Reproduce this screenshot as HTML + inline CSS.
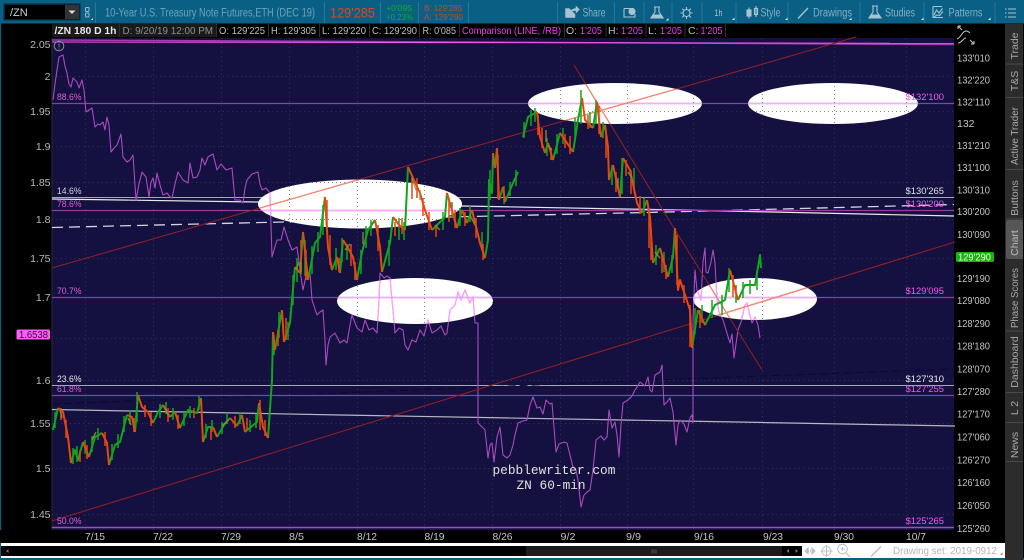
<!DOCTYPE html>
<html><head><meta charset="utf-8"><style>
html,body{margin:0;padding:0;background:#000;width:1024px;height:560px;overflow:hidden}
svg{display:block;font-family:"Liberation Sans",sans-serif;filter:blur(.35px)}
</style></head><body>
<svg width="1024" height="560" viewBox="0 0 1024 560" xmlns="http://www.w3.org/2000/svg">
<defs>
<clipPath id="ell"><ellipse cx="360" cy="204" rx="102" ry="24.5"/><ellipse cx="615" cy="103.5" rx="87" ry="20.5"/><ellipse cx="833" cy="103.5" rx="85" ry="20.5"/><ellipse cx="415" cy="301" rx="78" ry="23"/><ellipse cx="755" cy="299" rx="62" ry="21"/></clipPath>
<path id="pur" d="M53 100L55 84 57 70 59 57 63 55 65 66 67 73 69 84 71 87 73 78 77 82 79 88 82 80 84 90 86 112 89 110 92 108 95 127 98 124 100 125 103 122 105 130 107 117 109 125 111 152 114 148 117 145 121 134 123 157 127 162 130 160 133 155 136 200 139 184 142 172 146 177 149 197 151 182 153 178 155 188 157 173 160 185 163 195 167 193 170 197 172 198 175 184 178 172 183 180 188 183 190 163 193 178 197 177 200 170 202 158 205 165 208 157 213 154 217 170 221 164 226 170 232 168 235 200 240 200 243 203 245 188 247 180 252 174 258 172 260 184 262 190 266 188 270 193 272 257 274 250 277 240 281 240 284 227 288 240 292 250 297 247 300 270 303 290 306 276 310 273 312 300 317 315 320 312 323 310 325 340 326 365 328 345 330 337 335 333 340 343 344 340 347 343 350 325 352 315 357 328 362 332 365 320 369 330 373 328 377 333 379 300 380 273 384 278 387 276 390 278 392 300 393 310 395 333 399 328 403 330 405 345 408 350 412 340 416 342 420 330 424 336 428 320 432 333 437 330 441 326 445 335 447 333 450 310 455 305 458 292 461 300 465 290 470 303 473 297 475 323 478 323 478 423 485 430 488 458 490 445 492 443 494 462 497 437 500 427 503 455 507 458 510 455 513 445 515 435 518 423 523 421 527 420 530 405 533 397 537 408 540 407 543 414 546 400 550 404 552 403 556 452 559 444 564 442 567 443 570 455 573 467 576 470 578 480 581 507 584 495 587 492 590 490 593 470 596 440 601 436 604 440 607 437 609 410 612 428 615 422 617 435 619 457 621 425 623 403 628 400 632 396 635 390 640 382 645 386 648 377 650 390 652 392 655 375 660 372 662 365 664 405 667 402 670 398 673 412 676 445 678 425 680 420 684 424 687 432 690 418 692 415 693 423 693 320 695 270 697 290 701 300 703 262 705 248 706 272 708 273 711 262 713 250 715 263 717 300 719 312 723 320 726 330 730 343 732 334 734 358 738 330 741 322 745 305 747 303 750 316 752 323 755 317 758 325 760 338"/>
</defs>
<!-- page -->
<rect width="1024" height="560" fill="#000"/>
<rect x="0" y="0" width="1024" height="23.5" fill="#0a5f85"/>
<rect x="0" y="0" width="1.2" height="560" fill="#0a5f85"/>
<rect x="0" y="558" width="1024" height="2" fill="#0a5f85"/>
<!-- top bar -->
<rect x="3.5" y="3.5" width="77" height="17" fill="#06283a"/>
<rect x="5" y="5" width="60" height="14" fill="#000"/>
<rect x="65" y="5" width="14" height="14" fill="#333"/>
<path d="M68.5 10.5h7l-3.500 3.500z" fill="#ddd"/>
<text x="10" y="16" font-size="11" fill="#c8d2d8">/ZN</text>
<rect x="85.5" y="7.5" width="3.5" height="4" rx="1" fill="none" stroke="#9fb8c4"/><rect x="85.5" y="13" width="3.5" height="4" rx="1" fill="none" stroke="#9fb8c4"/>
<path d="M91 20h2v-2z" fill="#cfe"/>
<g stroke="#2a7699" stroke-width="1"><path d="M95.5 2v21M324.5 2v21M380.5 2v21M418.5 2v21M468.5 2v21M557.500 2v21M614.5 2v21M644 2v21M672 2v21M702 2v21M736 2v21M788 2v21M860 2v21M924 2v21M995 2v21"/></g>
<text x="105" y="16.500" font-size="11.500" fill="#6ea3b9" textLength="210" lengthAdjust="spacingAndGlyphs">10-Year U.S. Treasury Note Futures,ETH (DEC 19)</text>
<text x="330" y="17.500" font-size="13.500" fill="#e8431c" textLength="45" lengthAdjust="spacingAndGlyphs">129'285</text>
<text x="386" y="11" font-size="8.500" fill="#11a83a" textLength="26" lengthAdjust="spacingAndGlyphs">+0'095</text>
<text x="386" y="20" font-size="8.500" fill="#11a83a" textLength="27" lengthAdjust="spacingAndGlyphs">+0.23%</text>
<text x="424" y="11" font-size="8.500" fill="#c9482c" textLength="38" lengthAdjust="spacingAndGlyphs">B: 129'285</text>
<text x="424" y="20" font-size="8.500" fill="#c9482c" textLength="39" lengthAdjust="spacingAndGlyphs">A: 129'290</text>
<!-- toolbar right -->
<g fill="none" stroke="#a9c4d0" stroke-width="1.1">
<path d="M575 14v3.500h-9.500v-9h4M570 13c.5-3 3-4.500 6-4.500V6l3.500 3.500-3.500 3.500v-2.500c-2.500 0-4.500.5-6 2.500z" fill="#a9c4d0" stroke-width=".5"/>
<path d="M624 8.500h9v2M624 8.500v8.500h11v-3"/><circle cx="632" cy="11.500" r="3" fill="#a9c4d0"/>
<path d="M655 7v5l-4 6h12l-4-6V7M654 7h6"/><path d="M653 15h8l2 3h-12z" fill="#a9c4d0"/>
<circle cx="686.500" cy="13" r="3.500"/><path d="M686.500 7v2.500M686.500 16.500V19M680.500 13H683M690 13h2.500M682.300 8.800l1.800 1.800M689 15.500l1.800 1.800M682.300 17.200l1.800-1.800M689 10.500l1.800-1.800"/>
<path d="M749 7.500v11M756 6v11"/><rect x="747" y="10" width="4" height="6" fill="#a9c4d0"/><rect x="754.500" y="8.500" width="3" height="6"/>
<path d="M798 18.500 808 8" stroke-width="1.400"/>
<path d="M873 6v6l-4 6h12l-4-6V6M872 6h6"/><path d="M871 15h8l2 3h-12z" fill="#a9c4d0"/>
<path d="M933 6.500h9M933 6.500v11h10M934 15l2.500-5 2.500 3 3.500-4.500M934 17l3-2 2.500.5 3.500-4"/>
<path d="M1008 9h8M1008 13h8M1008 17h8"/><path d="M1005 9h1.500M1005 13h1.500M1005 17h1.500"/>
</g>
<g font-size="11.500" fill="#84b0c3">
<text x="582.500" y="16.500" textLength="23" lengthAdjust="spacingAndGlyphs">Share</text>
<text x="714.500" y="16" font-size="9" fill="#a9c4d0" textLength="8" lengthAdjust="spacingAndGlyphs">1h</text>
<text x="760.500" y="16.500" textLength="20" lengthAdjust="spacingAndGlyphs">Style</text>
<text x="813" y="16.500" textLength="39" lengthAdjust="spacingAndGlyphs">Drawings</text>
<text x="885" y="16.500" textLength="30" lengthAdjust="spacingAndGlyphs">Studies</text>
<text x="948.500" y="16.500" textLength="34" lengthAdjust="spacingAndGlyphs">Patterns</text>
</g>
<path d="M732 20h2.500v-2.500zM785 20h2.500v-2.500zM849 20h2.500v-2.500zM921 20h2.500v-2.500zM988 20h2.500v-2.500zM666 20.500h2.500v-2.500z" fill="#cfe"/>
<!-- header row -->
<g fill="#1a1a1a"><rect x="52" y="24" width="67" height="13"/><rect x="119" y="24" width="97" height="13"/></g>
<g stroke="#303030" stroke-width="1"><path d="M119.500 24v13M216.500 24v13M268.500 24v13M319.500 24v13M369.500 24v13M419.500 24v13M459.500 24v13M564.500 24v13M606 24v13M646 24v13M685 24v13M725.500 24v13"/></g>
<text x="54.500" y="34" font-size="10.500" font-weight="bold" fill="#e8e8e8" textLength="62" lengthAdjust="spacingAndGlyphs">/ZN 180 D 1h</text>
<g font-size="10.500" fill="#bdbdbd">
<text x="122.500" y="34" fill="#8f8f8f" textLength="90.500" lengthAdjust="spacingAndGlyphs">D: 9/20/19 12:00 PM</text>
<text x="219" y="34" textLength="46" lengthAdjust="spacingAndGlyphs">O: 129'225</text>
<text x="271" y="34" textLength="45" lengthAdjust="spacingAndGlyphs">H: 129'305</text>
<text x="322" y="34" textLength="44" lengthAdjust="spacingAndGlyphs">L: 129'220</text>
<text x="372" y="34" textLength="45" lengthAdjust="spacingAndGlyphs">C: 129'290</text>
<text x="422.500" y="34" textLength="33.500" lengthAdjust="spacingAndGlyphs">R: 0'085</text>
<text x="462" y="34" fill="#e83fe8" textLength="99" lengthAdjust="spacingAndGlyphs">Comparison (LINE, /RB)</text>
<text x="566" y="34">O:</text><text x="580" y="34" fill="#e83fe8" textLength="22" lengthAdjust="spacingAndGlyphs">1'205</text>
<text x="608" y="34">H:</text><text x="621" y="34" fill="#e83fe8" textLength="22" lengthAdjust="spacingAndGlyphs">1'205</text>
<text x="648" y="34">L:</text><text x="660" y="34" fill="#e83fe8" textLength="22" lengthAdjust="spacingAndGlyphs">1'205</text>
<text x="688" y="34">C:</text><text x="700.500" y="34" fill="#e83fe8" textLength="22" lengthAdjust="spacingAndGlyphs">1'205</text>
</g>
<g fill="none" stroke="#c8c8c8" stroke-width="1"><path d="M958 26l4 4M958 26h3M958 26v3M974 44l-4-4M974 44h-3M974 44v-3M957 39c4-1 5-8 9-8 2 0 3 1 4 2M958 43c4 0 5-5 8-5"/></g>
<!-- chart -->
<rect x="52" y="38" width="902" height="492" fill="#14103f"/>
<rect x="51.500" y="38" width="1" height="492" fill="#2a2a3a"/>
<g fill="none" stroke="#34325f" stroke-width="1" stroke-dasharray="1 3.500">
<path d="M85.500 38v492M153.500 38v492M221.500 38v492M289.500 38v492M357.500 38v492M424.500 38v492M492.500 38v492M560.500 38v492M627.500 38v492M693.500 38v492M762.500 38v492M834.500 38v492M906.500 38v492"/>
<path d="M52 76.500h902M52 111.500h902M52 146.500h902M52 182.500h902M52 219.500h902M52 258.500h902M52 338.500h902M52 380.500h902M52 423.500h902M52 468.500h902M52 514.500h902"/>
</g>
<!-- white / grey lines under ellipses -->
<path d="M52 197.500h902M52 385.500h902" stroke="#a8a6bc" stroke-width="1.100" fill="none"/>
<path d="M52 199 258 202 462 206 680 210 954 216" stroke="#e8e8ee" stroke-width="1.200" fill="none"/>
<path d="M52 227.500 283 222 450 217 667 212 954 204.500" stroke="#d6d4de" stroke-width="1.300" fill="none" stroke-dasharray="11 6"/>
<path d="M52 409.500 340 415 680 421 955 426" stroke="#b8b6c4" stroke-width="1.200" fill="none"/>
<path d="M52 404 340 393 680 379 954 369" stroke="#0b0930" stroke-width="1" fill="none" stroke-dasharray="8 4"/>
<!-- ellipses -->
<g fill="#fff"><ellipse cx="360" cy="204" rx="102" ry="24.500"/><ellipse cx="615" cy="103.500" rx="87" ry="20.500"/><ellipse cx="833" cy="103.500" rx="85" ry="20.500"/><ellipse cx="415" cy="301" rx="78" ry="23"/><ellipse cx="755" cy="299" rx="62" ry="21"/></g>
<g clip-path="url(#ell)" fill="none" stroke="#888" stroke-width="1" stroke-dasharray="1 3">
<path d="M289.500 38v492M357.500 38v492M424.500 38v492M492.500 38v492M560.500 38v492M627.500 38v492M693.500 38v492M762.500 38v492M834.500 38v492M906.500 38v492"/>
<path d="M52 111.500h902M52 182.500h902M52 219.500h902M52 338.500h902"/>
</g>
<!-- horizontals -->
<path d="M52 40 954 44.500" stroke="#a33ab8" stroke-width="1.500" fill="none"/>
<path d="M52 42 954 43.300" stroke="#ee5cee" stroke-width="1" fill="none"/>
<g stroke="#8a3fa3" stroke-width="1.300" fill="none">
<path d="M52 103.500h902M52 210.500h902M52 297.500h902M52 395.500h902"/>
<path d="M52 527.500h902" stroke="#a24cc0" stroke-width="1.500"/>
</g>
<g clip-path="url(#ell)"><path d="M52 103.500h902M52 210.500h902M52 297.500h902" stroke="#ffa6ff" stroke-width="1.300" fill="none"/></g>
<!-- purple -->
<use href="#pur" fill="none" stroke="#a84bc0" stroke-width="1.100" stroke-linejoin="round"/>
<g clip-path="url(#ell)"><use href="#pur" fill="none" stroke="#ffa0ff" stroke-width="1.200"/></g>
<!-- red lines -->
<g fill="none" stroke="#8e1f28" stroke-width="1.100">
<path d="M52 268 340 185 560 122 680 88 856 37"/>
<path d="M52 521 340 432 680 327 955 242"/>
<path d="M574 65 680 238 762 370"/>
</g>
<g clip-path="url(#ell)" fill="none" stroke="#ff8a70" stroke-width="1.100">
<path d="M52 268 340 185 560 122 680 88 856 37"/>
<path d="M52 521 340 432 680 327 955 242"/>
<path d="M574 65 680 238 762 370"/>
</g>
<!-- price candles -->
<g fill="none" stroke-linejoin="round">
<g stroke="#12a51c" stroke-width="2">
<path d="M53 430 58 408M71 463 75 450 78 460 83 442M89 457 95 437 102 433M109 465 115 445 120 442 127 415M135 432 138 395M153 423 158 412 163 405M170 417 175 412M180 428 188 410 197 413 201 398M203 442 208 427 213 427M217 437 224 425 230 418M237 426 242 415M245 432 257 422 259 403M268 438 272 380 273 332M275 350 282 310M284 342 290 323 292 300 295 267M300 273 303 232M308 280 315 243 320 237 325 197M332 270 337 257M340 273 343 240M357 280 362 252 368 230 375 220M382 272 390 243 393 217M405 230 408 167M432 230 440 222 445 217 447 193M457 228 462 210M467 223 472 210M485 258 488 240 489 180 492 193 493 153M495 168 497 148M499 200 503 187M505 202 513 183 518 172M523 137 528 117 537 112M545 153 548 143M553 160 560 133M573 152 578 120 582 98M593 128 597 102M601 137 605 125M609 180 613 165M620 197 623 158M642 213 647 200M653 263 660 248M668 277 673 257 675 228M692 348 698 310M705 325 715 305 725 300 730 270M738 300 745 285 755 285 760 255 761 268"/>
</g>
<g stroke="#12a51c" stroke-width="1.500">
<path d="M55 412v16M73 448v16M77 446v16M85 440v14M92 436v16M98 428v12M112 444v16M118 434v14M124 416v16M130 410v14M137 392v30M160 404v14M166 402v12M173 408v12M184 412v14M190 406v12M199 396v14M206 424v14M212 420v12M222 422v12M227 414v10M240 412v12M250 420v12M256 414v14M274 335v20M279 312v26M288 322v18M293 275v30M297 258v24M305 240v36M312 246v28M318 232v20M323 205v30M336 248v22M342 238v24M347 244v16M361 250v24M366 226v22M371 220v16M389 240v26M399 218v22M404 222v18M443 212v18M452 202v16M460 208v18M470 206v16M482 232v18M490 170v30M504 186v18M510 182v14M516 170v16M524 122v16M531 110v16M535 108v14M547 138v18M557 134v20M563 128v16M575 118v22M581 90v34M590 112v16M596 100v24M603 122v16M612 165v20M622 158v36M634 168v22M644 198v18M656 245v20M664 252v20M672 255v18M695 308v26M702 305v18M712 300v18M722 295v20M729 268v24M736 285v18M743 282v16M750 280v14M757 270v20"/>
</g>
<g stroke="#e8470f" stroke-width="2">
<path d="M58 408 63 412 68 437 71 463M83 442 89 457M102 433 107 443 109 465M127 415 132 417 135 432M138 395 142 407 148 412 153 423M163 405 170 417M175 412 180 428M201 398 203 442M213 427 217 437M230 418 237 426M242 415 245 432M259 403 263 427 268 438M273 332 275 350M282 310 284 342M295 267 300 273M303 232 308 280M325 197 328 247 332 270M337 257 340 273M343 240 348 248 353 257 357 280M375 220 380 247 382 272M393 217 400 226 405 230M408 167 420 193 425 210 432 230M447 193 457 228M462 210 467 223M472 210 480 243 485 258M493 153 495 168M497 148 499 200M503 187 505 202M537 112 540 137 545 153M548 143 553 160M560 133 567 143 573 152M582 98 585 120 593 128M597 102 601 137M605 125 608 147 609 180M613 165 620 197M623 158 630 170 637 203 642 213M647 200 650 217 653 263M660 248 668 277M675 228 678 290 680 280 690 310 692 348M698 310 705 325M730 270 738 300"/>
</g>
<g stroke="#e8470f" stroke-width="1.500">
<path d="M61 408v12M66 420v18M80 450v12M87 445v14M105 432v14M134 418v14M145 405v12M151 412v14M168 408v14M178 415v14M194 408v10M211 428v12M235 416v12M247 418v12M260 400v30M265 420v16M278 330v16M286 318v22M301 240v32M306 250v30M327 200v30M330 235v30M339 258v14M351 244v22M355 262v18M378 225v26M395 222v14M402 218v16M412 175v24M417 178v20M423 198v18M429 212v18M436 225v12M449 198v24M455 210v18M465 212v14M476 218v20M483 244v16M498 155v44M538 115v20M542 128v20M551 148v12M565 134v14M570 136v18M588 115v14M599 106v28M606 130v28M616 172v20M626 160v16M631 170v24M640 196v18M649 208v40M651 230v30M662 255v18M666 265v14M677 235v50M684 285v18M690 305v42M700 310v18M733 275v22"/>
</g>
<g stroke="#8f8f3a" stroke-width="1.500" opacity=".85"><path d="M60 410 62 418M92 440 96 432M128 418 131 425M165 408 168 415M222 426 228 420M296 270 299 262M345 250 350 244M412 178 416 190M435 225 440 230M470 215 475 225M548 145 552 150M628 172 632 178M655 252 660 258M301 262v12M363 232v12M420 190v10M546 130v12M618 178v10"/></g>
</g>
<circle cx="59" cy="46" r="4.800" fill="none" stroke="#8c8ca0" stroke-width="1"/><text x="59" y="49.500" font-size="8" fill="#a0a0b0" text-anchor="middle">!</text>
<!-- fib labels -->
<g font-size="9.500">
<text x="57" y="100" fill="#e05ee0" textLength="24.500" lengthAdjust="spacingAndGlyphs">88.6%</text>
<text x="57" y="194" fill="#d8d8e0" textLength="24.500" lengthAdjust="spacingAndGlyphs">14.6%</text>
<text x="57" y="207" fill="#e05ee0" textLength="24.500" lengthAdjust="spacingAndGlyphs">78.6%</text>
<text x="57" y="294" fill="#e05ee0" textLength="24.500" lengthAdjust="spacingAndGlyphs">70.7%</text>
<text x="57" y="382" fill="#e8e8f0" textLength="24.500" lengthAdjust="spacingAndGlyphs">23.6%</text>
<text x="57" y="392" fill="#e05ee0" textLength="24.500" lengthAdjust="spacingAndGlyphs">61.8%</text>
<text x="57" y="524" fill="#e05ee0" textLength="24.500" lengthAdjust="spacingAndGlyphs">50.0%</text>
<text x="905.500" y="100" fill="#ee5cee" textLength="38.500" lengthAdjust="spacingAndGlyphs">$132'100</text>
<text x="905.500" y="194" fill="#e0e0e8" textLength="38.500" lengthAdjust="spacingAndGlyphs">$130'265</text>
<text x="905.500" y="207" fill="#ee5cee" textLength="38.500" lengthAdjust="spacingAndGlyphs">$130'200</text>
<text x="905.500" y="294" fill="#ee5cee" textLength="38.500" lengthAdjust="spacingAndGlyphs">$129'095</text>
<text x="905.500" y="382" fill="#e8e8f0" textLength="38.500" lengthAdjust="spacingAndGlyphs">$127'310</text>
<text x="905.500" y="392" fill="#ee5cee" textLength="38.500" lengthAdjust="spacingAndGlyphs">$127'255</text>
<text x="905.500" y="524" fill="#ee5cee" textLength="38.500" lengthAdjust="spacingAndGlyphs">$125'265</text>
</g>
<text x="492.500" y="474" font-family="Liberation Mono,monospace" font-size="12.800" fill="#e0e0e0">pebblewriter.com</text>
<text x="516.500" y="489" font-family="Liberation Mono,monospace" font-size="12.800" fill="#e0e0e0">ZN 60-min</text>
<!-- left axis -->
<g font-size="10.500" fill="#b8b8b8" text-anchor="end">
<text x="50.500" y="48">2.05</text><text x="50.500" y="80">2</text><text x="50.500" y="115">1.95</text><text x="50.500" y="150">1.9</text><text x="50.500" y="186">1.85</text><text x="50.500" y="223">1.8</text><text x="50.500" y="262">1.75</text><text x="50.500" y="301">1.7</text><text x="50.500" y="384">1.6</text><text x="50.500" y="427">1.55</text><text x="50.500" y="472">1.5</text><text x="50.500" y="518">1.45</text>
</g>
<rect x="16.500" y="329.500" width="33.500" height="10" rx="1.500" fill="#ff5cf5"/>
<text x="19" y="338" font-size="10" fill="#2a1038" textLength="29" lengthAdjust="spacingAndGlyphs">1.6538</text>
<!-- right axis -->
<g font-size="10.500" fill="#c4c4c4">
<text x="957" y="61.500" textLength="33" lengthAdjust="spacingAndGlyphs">133'010</text>
<text x="957" y="83.500" textLength="33" lengthAdjust="spacingAndGlyphs">132'220</text>
<text x="957" y="105.500" textLength="33" lengthAdjust="spacingAndGlyphs">132'110</text>
<text x="957" y="127">132</text>
<text x="957" y="149" textLength="33" lengthAdjust="spacingAndGlyphs">131'210</text>
<text x="957" y="171" textLength="33" lengthAdjust="spacingAndGlyphs">131'100</text>
<text x="957" y="193.500" textLength="33" lengthAdjust="spacingAndGlyphs">130'310</text>
<text x="957" y="215" textLength="33" lengthAdjust="spacingAndGlyphs">130'200</text>
<text x="957" y="238" textLength="33" lengthAdjust="spacingAndGlyphs">130'090</text>
<text x="957" y="282" textLength="33" lengthAdjust="spacingAndGlyphs">129'190</text>
<text x="957" y="304" textLength="33" lengthAdjust="spacingAndGlyphs">129'080</text>
<text x="957" y="327" textLength="33" lengthAdjust="spacingAndGlyphs">128'290</text>
<text x="957" y="349.500" textLength="33" lengthAdjust="spacingAndGlyphs">128'180</text>
<text x="957" y="372.500" textLength="33" lengthAdjust="spacingAndGlyphs">128'070</text>
<text x="957" y="395" textLength="33" lengthAdjust="spacingAndGlyphs">127'280</text>
<text x="957" y="417.500" textLength="33" lengthAdjust="spacingAndGlyphs">127'170</text>
<text x="957" y="440.500" textLength="33" lengthAdjust="spacingAndGlyphs">127'060</text>
<text x="957" y="463.500" textLength="33" lengthAdjust="spacingAndGlyphs">126'270</text>
<text x="957" y="486" textLength="33" lengthAdjust="spacingAndGlyphs">126'160</text>
<text x="957" y="509" textLength="33" lengthAdjust="spacingAndGlyphs">126'050</text>
<text x="957" y="532" textLength="33" lengthAdjust="spacingAndGlyphs">125'260</text>
</g>
<rect x="956" y="252" width="38" height="10" rx="1.500" fill="#17b30f"/>
<text x="958" y="260.500" font-size="10.500" fill="#eafbe8" textLength="33" lengthAdjust="spacingAndGlyphs">129'290</text>
<!-- x axis -->
<rect x="0" y="530" width="954" height="13" fill="#000"/>
<g font-size="10.500" fill="#c4c4c4">
<text x="85" y="540" textLength="20" lengthAdjust="spacingAndGlyphs">7/15</text><text x="153" y="540" textLength="20" lengthAdjust="spacingAndGlyphs">7/22</text><text x="221" y="540" textLength="20" lengthAdjust="spacingAndGlyphs">7/29</text><text x="289" y="540" textLength="15" lengthAdjust="spacingAndGlyphs">8/5</text><text x="357" y="540" textLength="20" lengthAdjust="spacingAndGlyphs">8/12</text><text x="424.500" y="540" textLength="20" lengthAdjust="spacingAndGlyphs">8/19</text><text x="492.500" y="540" textLength="20" lengthAdjust="spacingAndGlyphs">8/26</text><text x="560.500" y="540" textLength="15" lengthAdjust="spacingAndGlyphs">9/2</text><text x="626" y="540" textLength="15" lengthAdjust="spacingAndGlyphs">9/9</text><text x="694" y="540" textLength="20" lengthAdjust="spacingAndGlyphs">9/16</text><text x="763" y="540" textLength="20" lengthAdjust="spacingAndGlyphs">9/23</text><text x="834" y="540" textLength="20" lengthAdjust="spacingAndGlyphs">9/30</text><text x="906" y="540" textLength="20" lengthAdjust="spacingAndGlyphs">10/7</text>
</g>
<!-- bottom strip -->
<rect x="1" y="543" width="1004" height="15" fill="#fff"/>
<rect x="1" y="546" width="801" height="10" fill="#000"/>
<rect x="526" y="546" width="256" height="10" fill="#1b1b1b"/>
<path d="M652 549.500v4M654 549.500v4M656 549.500v4" stroke="#555" stroke-width="1"/>
<path d="M6 551l2.500-2v4zM786.500 551l2.500-2v4zM798 551l-2.500-2v4z" fill="#777"/>
<g fill="none" stroke="#b9c0c6" stroke-width="1">
<path d="M806 551h8" stroke-width="3" stroke-dasharray="1 1"/><path d="M805 551l3-3v6zM815 551l-3-3v6z" fill="#b9c0c6"/>
<circle cx="826.500" cy="551" r="4.500"/><path d="M826.500 545v12M820.500 551h12"/>
<circle cx="842.500" cy="549" r="4.800"/><path d="M846 553l4 4M842.500 547v4M840.500 549h4"/>
<path d="M871 556.500l10-10" stroke-width="1.300"/>
</g>
<text x="893" y="554" font-size="10.500" fill="#b4b4b4" textLength="104" lengthAdjust="spacingAndGlyphs">Drawing set: 2019-0912</text>
<path d="M1000 555h2.500v-2.500z" fill="#888"/>
<!-- sidebar -->
<rect x="1005" y="24" width="18" height="536" fill="#2c2c2c"/>
<g stroke="#4a4a4a" stroke-width="1"><path d="M1006 64h17M1006 97.500h17M1006 169.500h17M1006 219h17M1006 331h17M1006 392.500h17M1006 422.500h17M1006 461.500h17"/></g>
<rect x="1006" y="220" width="17" height="39" rx="2" fill="#565656"/>
<g font-size="10.500" fill="#a8a8a8" text-anchor="middle">
<text transform="translate(1018 46) rotate(-90)">Trade</text>
<text transform="translate(1018 81) rotate(-90)">T&amp;S</text>
<text transform="translate(1018 136) rotate(-90)" textLength="58" lengthAdjust="spacingAndGlyphs">Active Trader</text>
<text transform="translate(1018 198) rotate(-90)">Buttons</text>
<text transform="translate(1018 243) rotate(-90)" fill="#bbb">Chart</text>
<text transform="translate(1018 298) rotate(-90)" textLength="60" lengthAdjust="spacingAndGlyphs">Phase Scores</text>
<text transform="translate(1018 362) rotate(-90)">Dashboard</text>
<text transform="translate(1018 408) rotate(-90)">L 2</text>
<text transform="translate(1018 445) rotate(-90)">News</text>
</g>
</svg>
</body></html>
